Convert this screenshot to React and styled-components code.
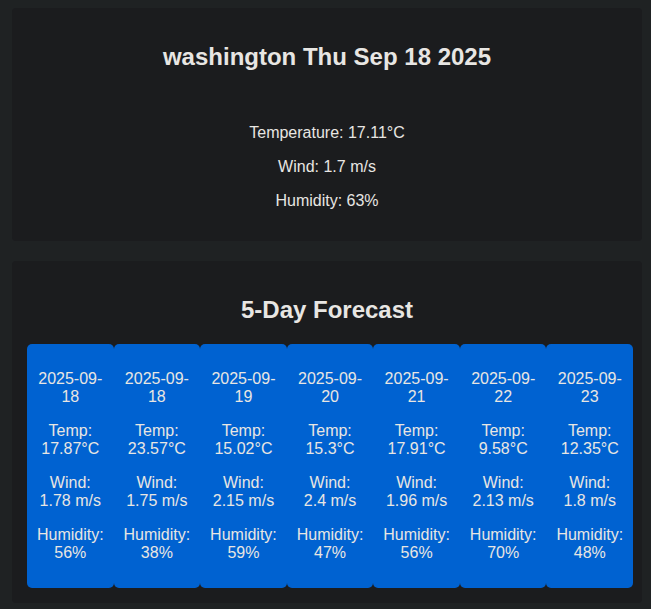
import React from "react";
import styled, { createGlobalStyle } from "styled-components";

const GlobalStyle = createGlobalStyle`
  html, body {
    margin: 0;
    padding: 0;
    background: #1f2223;
  }
  body {
    font-family: "Liberation Sans", Arial, sans-serif;
    color: #e8e6e3;
  }
`;

const Page = styled.div`
  display: flex;
  flex-direction: column;
  gap: 20px;
  padding: 8px 9px 0 12px;
`;

const Card = styled.section`
  background: #1b1c1e;
  border-radius: 4px;
  padding: 15px;
  text-align: center;
`;

const Title = styled.h2`
  margin: 20px 0;
  font-size: 24px;
  font-weight: bold;
  line-height: normal;
  color: #e8e6e3;
`;

const Info = styled.div`
  padding-top: 17px;
`;

const Line = styled.p`
  margin: 16px 0;
  font-size: 16px;
  line-height: normal;
`;

const Row = styled.div`
  display: flex;
  margin-right: -6px;
`;

const Day = styled.div`
  flex: 1 1 0;
  min-width: 0;
  background: #0062d1;
  border-radius: 5px;
  padding: 10px 9.7px;
  color: #e8e6e3;
`;

const current = {
  city: "washington",
  date: "Thu Sep 18 2025",
  temp: "17.11",
  wind: "1.7",
  humidity: "63",
};

const forecast = [
  { date: "2025-09-18", temp: "17.87", wind: "1.78", hum: "56" },
  { date: "2025-09-18", temp: "23.57", wind: "1.75", hum: "38" },
  { date: "2025-09-19", temp: "15.02", wind: "2.15", hum: "59" },
  { date: "2025-09-20", temp: "15.3", wind: "2.4", hum: "47" },
  { date: "2025-09-21", temp: "17.91", wind: "1.96", hum: "56" },
  { date: "2025-09-22", temp: "9.58", wind: "2.13", hum: "70" },
  { date: "2025-09-23", temp: "12.35", wind: "1.8", hum: "48" },
];

export default function App() {
  return (
    <>
      <GlobalStyle />
      <Page>
        <Card>
          <Title>
            {current.city} {current.date}
          </Title>
          <Info>
            <Line>Temperature: {current.temp}°C</Line>
            <Line>Wind: {current.wind} m/s</Line>
            <Line>Humidity: {current.humidity}%</Line>
          </Info>
        </Card>
        <Card>
          <Title>5-Day Forecast</Title>
          <Row>
            {forecast.map((d, i) => (
              <Day key={i}>
                <Line>{d.date}</Line>
                <Line>Temp: {d.temp}°C</Line>
                <Line>Wind: {d.wind} m/s</Line>
                <Line>Humidity: {d.hum}%</Line>
              </Day>
            ))}
          </Row>
        </Card>
      </Page>
    </>
  );
}
